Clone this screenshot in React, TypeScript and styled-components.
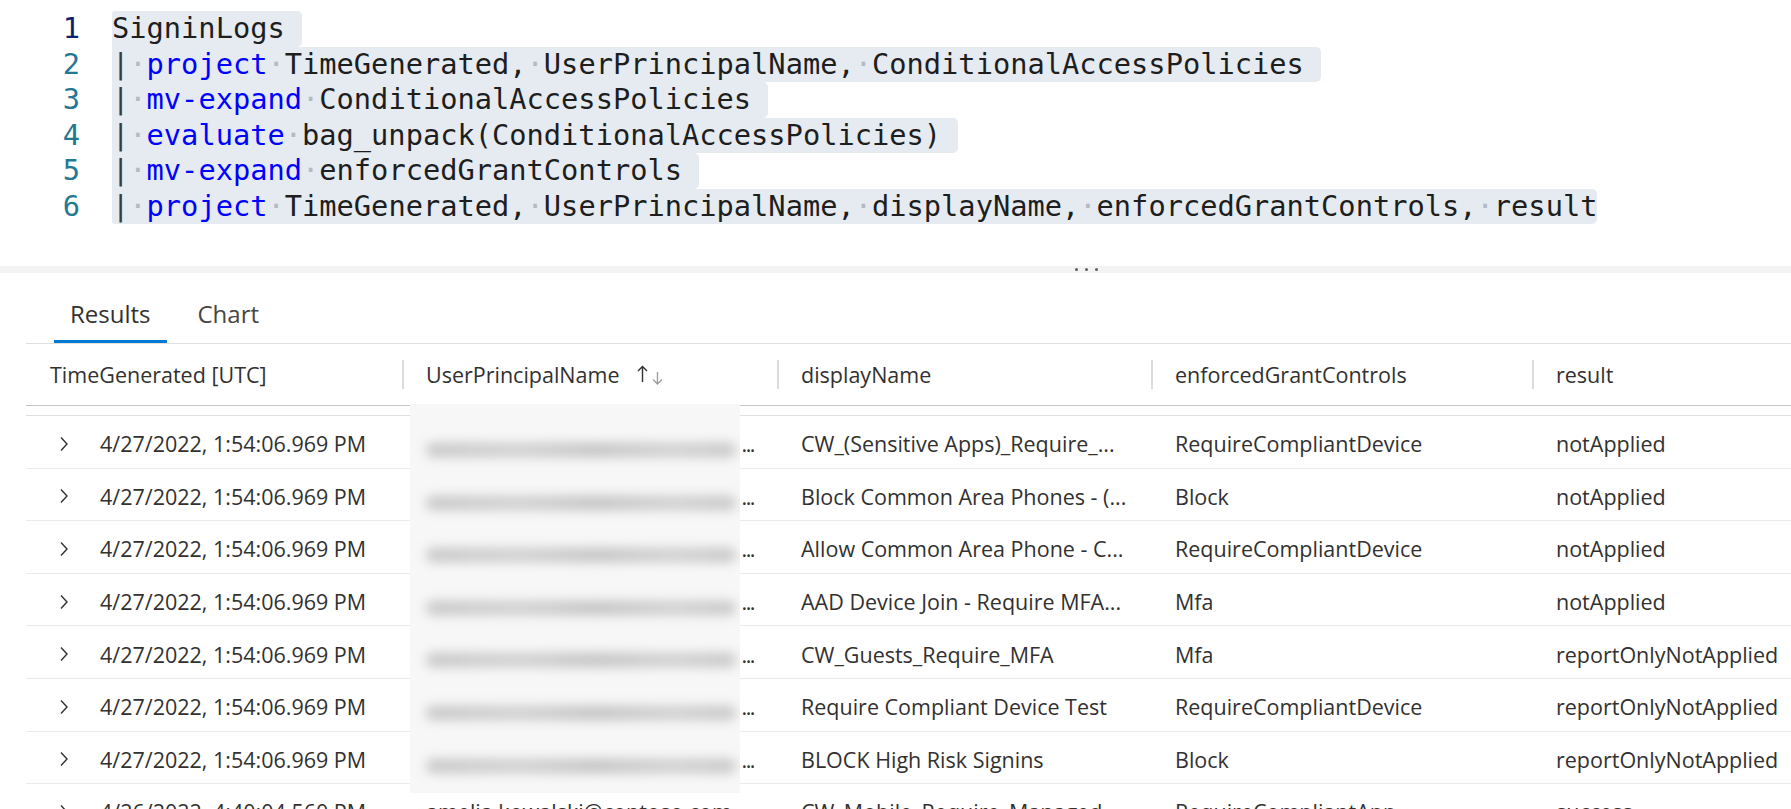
import React from 'react';
import styled, { createGlobalStyle } from 'styled-components';

const GlobalStyle = createGlobalStyle`
  html, body {
    margin: 0;
    padding: 0;
    background: #fff;
  }
  body {
    font-family: 'Open Sans', 'Noto Sans', sans-serif;
    overflow: hidden;
  }
`;

const KEYWORDS = ['project', 'mv-expand', 'evaluate'];

const QUERY = [
  'SigninLogs',
  '| project TimeGenerated, UserPrincipalName, ConditionalAccessPolicies',
  '| mv-expand ConditionalAccessPolicies',
  '| evaluate bag_unpack(ConditionalAccessPolicies)',
  '| mv-expand enforcedGrantControls',
  '| project TimeGenerated, UserPrincipalName, displayName, enforcedGrantControls, result',
];

const COLUMNS = '376px 375px 374px 381px 1fr';

interface Row {
  time: string;
  upn: string;
  displayName: string;
  grant: string;
  result: string;
  redacted: boolean;
}

const ROWS: Row[] = [
  { time: '4/27/2022, 1:54:06.969 PM', upn: '...', displayName: 'CW_(Sensitive Apps)_Require_...', grant: 'RequireCompliantDevice', result: 'notApplied', redacted: true },
  { time: '4/27/2022, 1:54:06.969 PM', upn: '...', displayName: 'Block Common Area Phones - (...', grant: 'Block', result: 'notApplied', redacted: true },
  { time: '4/27/2022, 1:54:06.969 PM', upn: '...', displayName: 'Allow Common Area Phone - C...', grant: 'RequireCompliantDevice', result: 'notApplied', redacted: true },
  { time: '4/27/2022, 1:54:06.969 PM', upn: '...', displayName: 'AAD Device Join - Require MFA...', grant: 'Mfa', result: 'notApplied', redacted: true },
  { time: '4/27/2022, 1:54:06.969 PM', upn: '...', displayName: 'CW_Guests_Require_MFA', grant: 'Mfa', result: 'reportOnlyNotApplied', redacted: true },
  { time: '4/27/2022, 1:54:06.969 PM', upn: '...', displayName: 'Require Compliant Device Test', grant: 'RequireCompliantDevice', result: 'reportOnlyNotApplied', redacted: true },
  { time: '4/27/2022, 1:54:06.969 PM', upn: '...', displayName: 'BLOCK High Risk Signins', grant: 'Block', result: 'reportOnlyNotApplied', redacted: true },
  { time: '4/26/2022, 4:40:04.560 PM', upn: 'amelia.kowalski@contoso.com', displayName: 'CW_Mobile_Require_Managed...', grant: 'RequireCompliantApp', result: 'success', redacted: false },
];

const Page = styled.div`
  width: 1791px;
  height: 809px;
  overflow: hidden;
  background: #fff;
`;

/* ---------- query editor ---------- */

const Editor = styled.div`
  height: 266px;
  box-sizing: border-box;
  padding-top: 11px;
  font-family: 'DejaVu Sans Mono', 'Liberation Mono', monospace;
  font-size: 28.7px;
`;

const CodeLine = styled.div`
  display: flex;
  height: 35.5px;
  line-height: 35.5px;
`;

const LineNumber = styled.span<{ $active?: boolean }>`
  flex: none;
  width: 80px;
  text-align: right;
  color: ${(p) => (p.$active ? '#0b216f' : '#237893')};
`;

const LineText = styled.span<{ $first?: boolean; $last?: boolean }>`
  margin-left: 32px;
  white-space: pre;
  color: #1e1e1e;
  background: #e5ebf1;
  border-radius: ${(p) => (p.$first ? '3px' : '0')} 5px 5px
    ${(p) => (p.$last ? '3px' : '0')};
`;

const Keyword = styled.span`
  color: #0000ff;
`;

const Pipe = styled.span`
  color: #3b3b3b;
`;

const WhiteDot = styled.span`
  color: #b4bac1;
`;

/* ---------- splitter ---------- */

const Splitter = styled.div`
  height: 7px;
  background: #f3f3f3;
  display: flex;
  align-items: center;
  gap: 7px;
  padding-left: 1075px;
`;

const Grip = styled.span`
  width: 3px;
  height: 3px;
  border-radius: 50%;
  background: #605e5c;
`;

/* ---------- results ---------- */

const Results = styled.div`
  margin-left: 26px;
`;

const TabBar = styled.div`
  display: flex;
  gap: 15px;
  padding-left: 28px;
  border-bottom: 1px solid #e1dfdd;
`;

const Tab = styled.div<{ $active?: boolean }>`
  padding: 24px 16px 10px;
  font-size: 24px;
  line-height: 33px;
  color: ${(p) => (p.$active ? '#323130' : '#484644')};
  border-bottom: 3px solid ${(p) => (p.$active ? '#0078d4' : 'transparent')};
`;

const Table = styled.div`
  position: relative;
`;

const HeaderRow = styled.div`
  display: grid;
  grid-template-columns: ${COLUMNS};
  height: 62px;
  box-sizing: border-box;
  align-items: center;
  border-bottom: 1px solid #c8c6c4;
`;

const HeaderCell = styled.div<{ $divider?: boolean }>`
  position: relative;
  display: flex;
  align-items: center;
  padding-left: 24px;
  font-size: 21.5px;
  line-height: 29px;
  color: #323130;
  white-space: nowrap;

  &::before {
    content: '';
    display: ${(p) => (p.$divider ? 'block' : 'none')};
    position: absolute;
    left: 0;
    top: 0;
    width: 2px;
    height: 29px;
    background: #dcdcdc;
  }
`;

const SortIcon = styled.svg`
  margin-left: 18px;
  flex: none;
`;

const Body = styled.div`
  margin-top: 9px;
  border-top: 1px solid #e1dfdd;
`;

const DataRow = styled.div`
  display: grid;
  grid-template-columns: ${COLUMNS};
  height: 52.6px;
  box-sizing: border-box;
  padding-top: 4px;
  align-items: center;
  border-bottom: 1px solid #edebe9;
  font-size: 21.5px;
  line-height: 29px;
  color: #323130;
`;

const Cell = styled.div`
  padding: 0 24px;
  white-space: nowrap;
  overflow: hidden;
`;

const HiddenValueCell = styled.div`
  padding-right: 23px;
  text-align: right;
  letter-spacing: -1.5px;
  white-space: nowrap;
  overflow: hidden;
`;

const TimeCell = styled.div`
  display: flex;
  align-items: center;
  gap: 31px;
  padding-left: 33px;
  white-space: nowrap;
`;

const Redaction = styled.div`
  position: absolute;
  left: 384px;
  top: 60px;
  width: 330px;
  height: 389px;
  background: #f7f7f7;
  display: flex;
  flex-direction: column;
  gap: 38.6px;
  padding-top: 39px;
  box-sizing: border-box;
  overflow: hidden;
`;

const Smudge = styled.div`
  flex: none;
  margin-left: 16px;
  width: 310px;
  height: 14px;
  border-radius: 7px;
  background: linear-gradient(
    90deg,
    rgba(0, 0, 0, 0.2),
    rgba(0, 0, 0, 0.16) 30%,
    rgba(0, 0, 0, 0.21) 55%,
    rgba(0, 0, 0, 0.16) 80%,
    rgba(0, 0, 0, 0.2)
  );
  filter: blur(6px);
`;

const Chevron = () => (
  <svg width="10" height="16" viewBox="0 0 10 16">
    <path d="M2 1.5 L8 8 L2 14.5" fill="none" stroke="#323130" strokeWidth="1.4" />
  </svg>
);

const renderCode = (line: string) => {
  const parts = line.split(' ');
  return parts.map((word, i) => {
    let node: React.ReactNode = word;
    if (KEYWORDS.includes(word)) node = <Keyword>{word}</Keyword>;
    else if (word === '|') node = <Pipe>|</Pipe>;
    return (
      <React.Fragment key={i}>
        {i > 0 && <WhiteDot>·</WhiteDot>}
        {node}
      </React.Fragment>
    );
  });
};

export default function App() {
  return (
    <Page>
      <GlobalStyle />
      <Editor>
        {QUERY.map((line, i) => (
          <CodeLine key={i}>
            <LineNumber $active={i === 0}>{i + 1}</LineNumber>
            <LineText $first={i === 0} $last={i === QUERY.length - 1}>
              {renderCode(line)}
              {i < QUERY.length - 1 ? ' ' : ''}
            </LineText>
          </CodeLine>
        ))}
      </Editor>

      <Splitter>
        <Grip />
        <Grip />
        <Grip />
      </Splitter>

      <Results>
        <TabBar>
          <Tab $active>Results</Tab>
          <Tab>Chart</Tab>
        </TabBar>

        <Table>
          <HeaderRow>
            <HeaderCell>TimeGenerated [UTC]</HeaderCell>
            <HeaderCell $divider>
              UserPrincipalName
              <SortIcon width="28" height="20" viewBox="0 0 28 20">
                <path d="M5.5 1.5 V17 M1 6 L5.5 1.5 L10 6" fill="none" stroke="#323130" strokeWidth="1.4" />
                <path d="M20.5 7 V19 M16 14.5 L20.5 19 L25 14.5" fill="none" stroke="#a19f9d" strokeWidth="1.4" />
              </SortIcon>
            </HeaderCell>
            <HeaderCell $divider>displayName</HeaderCell>
            <HeaderCell $divider>enforcedGrantControls</HeaderCell>
            <HeaderCell $divider>result</HeaderCell>
          </HeaderRow>

          <Body>
            {ROWS.map((row, i) => (
              <DataRow key={i}>
                <TimeCell>
                  <Chevron />
                  {row.time}
                </TimeCell>
                {row.redacted ? (
                  <HiddenValueCell>{row.upn}</HiddenValueCell>
                ) : (
                  <Cell>{row.upn}</Cell>
                )}
                <Cell>{row.displayName}</Cell>
                <Cell>{row.grant}</Cell>
                <Cell>{row.result}</Cell>
              </DataRow>
            ))}
          </Body>

          <Redaction>
            {ROWS.filter((r) => r.redacted).map((_, i) => (
              <Smudge key={i} />
            ))}
          </Redaction>
        </Table>
      </Results>
    </Page>
  );
}
